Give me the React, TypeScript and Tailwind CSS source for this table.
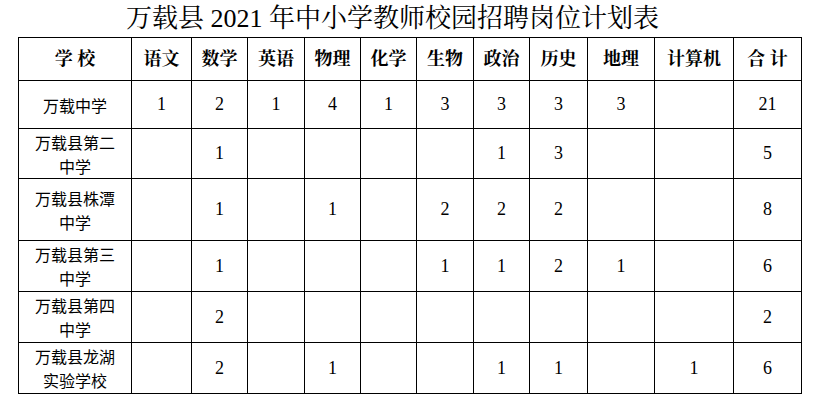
import React from "react";

const cols = [113, 60, 56, 57, 56, 56, 57, 56, 58, 67, 79, 68];
const heads = ["学 校", "语文", "数学", "英语", "物理", "化学", "生物", "政治", "历史", "地理", "计算机", "合 计"];

type Row = { name: string[]; vals: string[]; h: string };
const rows: Row[] = [
  { name: ["万载中学"], vals: ["1", "2", "1", "4", "1", "3", "3", "3", "3", "", "21"], h: "h-[48px]" },
  { name: ["万载县第二", "中学"], vals: ["", "1", "", "", "", "", "1", "3", "", "", "5"], h: "h-[50px]" },
  { name: ["万载县株潭", "中学"], vals: ["", "1", "", "1", "", "2", "2", "2", "", "", "8"], h: "h-[62px]" },
  { name: ["万载县第三", "中学"], vals: ["", "1", "", "", "", "1", "1", "2", "1", "", "6"], h: "h-[51px]" },
  { name: ["万载县第四", "中学"], vals: ["", "2", "", "", "", "", "", "", "", "", "2"], h: "h-[51px]" },
  { name: ["万载县龙湖", "实验学校"], vals: ["", "2", "", "1", "", "", "1", "1", "", "1", "6"], h: "h-[51px]" },
];

const serif = "font-['Liberation_Serif','Noto_Serif_CJK_SC','Noto_Sans_CJK_SC',serif]";
const cjk = "font-['Noto_Sans_CJK_SC','Liberation_Sans',sans-serif]";

export default function App() {
  return (
    <div className="w-[813px] h-[404px] bg-white text-black">
      <div className={`h-[37px] pl-[126px] pt-[3px] text-[26px] leading-[32px] whitespace-pre ${serif}`}>
        万载县 2021 年中小学教师校园招聘岗位计划表
      </div>
      <table className="ml-[18px] table-fixed border-collapse border border-black">
        <colgroup>
          {cols.map((w, i) => (
            <col key={i} style={{ width: w }} />
          ))}
        </colgroup>
        <thead>
          <tr className="h-[43px]">
            {heads.map((h, i) => (
              <th
                key={i}
                className={`border border-black p-0 text-center align-middle text-[18px] font-bold whitespace-pre ${serif}`}
              >
                {h}
              </th>
            ))}
          </tr>
        </thead>
        <tbody>
          {rows.map((r, ri) => (
            <tr key={ri} className={r.h}>
              <td className={`border border-black p-0 text-center align-middle text-[16px] leading-[24px] ${cjk}`}>
                {r.name.map((n, ni) => (
                  <div key={ni}>{n}</div>
                ))}
              </td>
              {r.vals.map((v, vi) => (
                <td
                  key={vi}
                  className="border border-black p-0 text-center align-middle text-[18px] font-['Liberation_Serif',serif]"
                >
                  {v}
                </td>
              ))}
            </tr>
          ))}
        </tbody>
      </table>
    </div>
  );
}
